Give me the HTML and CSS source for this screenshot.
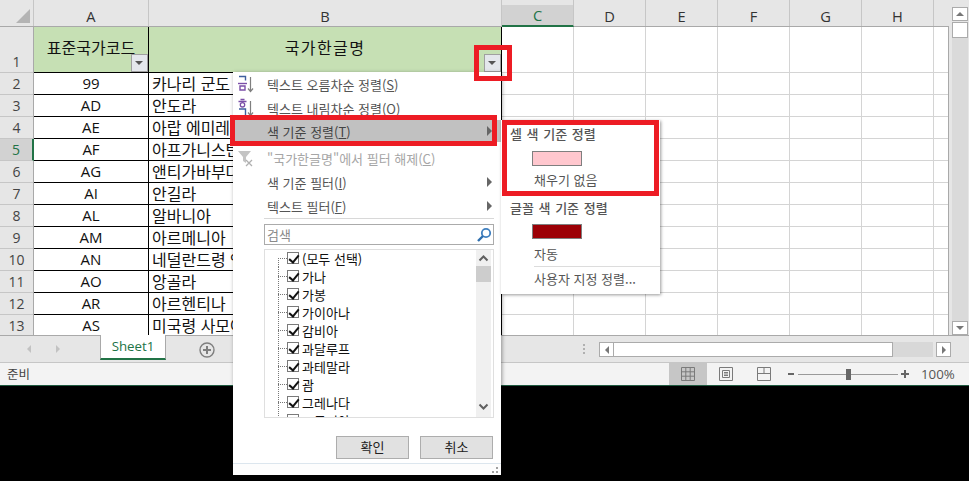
FILE: index.html
```html
<!DOCTYPE html>
<html lang="ko">
<head>
    <meta charset="UTF-8">
    <title>국가한글명 필터</title>
    <link rel="stylesheet" href="styles.css">
</head>
<body>
<div class="app">
    <div class="sheet">
        <div class="grid">
            <div class="col-heads">
                <div class="corner"><i></i></div>
                <div class="col-head col-a">A</div>
                <div class="col-head col-b">B</div>
                <div class="col-head col-n on">C</div>
                <div class="col-head col-n">D</div>
                <div class="col-head col-n">E</div>
                <div class="col-head col-n">F</div>
                <div class="col-head col-n">G</div>
                <div class="col-head col-n">H</div>
            </div>
            <div class="body">
                <div class="row-heads">
                    <div class="row-head first">1</div>
                    <div class="row-head">2</div>
                    <div class="row-head">3</div>
                    <div class="row-head">4</div>
                    <div class="row-head on">5</div>
                    <div class="row-head">6</div>
                    <div class="row-head">7</div>
                    <div class="row-head">8</div>
                    <div class="row-head">9</div>
                    <div class="row-head">10</div>
                    <div class="row-head">11</div>
                    <div class="row-head">12</div>
                    <div class="row-head">13</div>
                </div>
                <div class="cells">
                    <div class="cell title">표준국가코드<span class="filter-btn"></span></div>
                    <div class="cell title wide">국가한글명<span class="filter-btn"></span></div>
                    <div class="cell code">99</div><div class="cell name">카나리 군도</div>
                    <div class="cell code">AD</div><div class="cell name">안도라</div>
                    <div class="cell code">AE</div><div class="cell name">아랍 에미레이트</div>
                    <div class="cell code">AF</div><div class="cell name">아프가니스탄</div>
                    <div class="cell code">AG</div><div class="cell name">앤티가바부다</div>
                    <div class="cell code">AI</div><div class="cell name">안길라</div>
                    <div class="cell code">AL</div><div class="cell name">알바니아</div>
                    <div class="cell code">AM</div><div class="cell name">아르메니아</div>
                    <div class="cell code">AN</div><div class="cell name">네덜란드령 앤틸리스</div>
                    <div class="cell code">AO</div><div class="cell name">앙골라</div>
                    <div class="cell code">AR</div><div class="cell name">아르헨티나</div>
                    <div class="cell code">AS</div><div class="cell name">미국령 사모아</div>
                </div>
                <div class="blank">
                    <div class="blank-top"></div>
                    <div class="blank-rest"></div>
                </div>
            </div>
        </div>
        <div class="vscroll">
            <div class="sb-btn"><i class="tri-up"></i></div>
            <div class="sb-thumb"></div>
            <div class="sb-track"></div>
            <div class="sb-btn"><i class="tri-down"></i></div>
        </div>
    </div>

    <div class="tabbar">
        <div class="tab-nav"><i class="tri-left"></i><i class="tri-right"></i></div>
        <div class="tab">Sheet1</div>
        <svg class="add-sheet" width="16" height="16" viewBox="0 0 16 16"><circle cx="8" cy="8" r="7" fill="none" stroke="#7f7f7f" stroke-width="1.4"/><path d="M4 8h8M8 4v8" stroke="#7f7f7f" stroke-width="2"/></svg>
        <div class="split-dots"></div>
        <div class="hscroll">
            <div class="hs-btn"><i class="tri-left dark"></i></div>
            <div class="hs-thumb"></div>
            <div class="hs-track"></div>
            <div class="hs-btn"><i class="tri-right dark"></i></div>
        </div>
    </div>

    <div class="status">
        <span class="ready">준비</span>
        <div class="views">
            <div class="view on">
                <svg width="14" height="14" viewBox="0 0 14 14"><path d="M.5.5h13v13H.5zM.5 4.8h13M.5 9.2h13M4.8.5v13M9.2.5v13" fill="none" stroke="#7a7a7a"/></svg>
            </div>
            <div class="view">
                <svg width="14" height="14" viewBox="0 0 14 14"><path d="M.5.5h13v13H.5z" fill="none" stroke="#7a7a7a"/><path d="M3.5 3.5h7v7h-7zM5 5.5h4M5 7h4M5 8.5h4" fill="none" stroke="#7a7a7a"/></svg>
            </div>
            <div class="view">
                <svg width="14" height="14" viewBox="0 0 14 14"><path d="M.5.5h13v13H.5zM.5 6.5h13M7 .5v6" fill="none" stroke="#7a7a7a"/></svg>
            </div>
        </div>
        <div class="zoom">
            <span class="zoom-minus"></span>
            <div class="zoom-line"><i></i></div>
            <span class="zoom-plus"></span>
            <span class="zoom-val">100%</span>
        </div>
    </div>
</div>

<!-- 필터 메뉴 -->
<div class="menu">
    <div class="item">
        <svg class="ico" width="18" height="20" viewBox="0 0 18 20"><path d="M2 2.5h6.5v4" fill="none" stroke="#3f5f9f" stroke-width="1.4"/><path d="M1 9.5h9" stroke="#7b4fa8" stroke-width="1.4"/><path d="M3 12h5v4H3z" fill="none" stroke="#7b4fa8" stroke-width="1.4"/><path d="M13.5 3v14M11 14.5l2.5 3 2.5-3" fill="none" stroke="#7f7f7f" stroke-width="1.2"/></svg>
        <span>텍스트 오름차순 정렬(<u>S</u>)</span>
    </div>
    <div class="item">
        <svg class="ico" width="18" height="20" viewBox="0 0 18 20"><path d="M3.5 1.5h4M1.5 3.5h8" fill="none" stroke="#7b4fa8" stroke-width="1.3"/><circle cx="5.5" cy="6.8" r="2.2" fill="none" stroke="#7b4fa8" stroke-width="1.3"/><path d="M2 11h6.5v6" fill="none" stroke="#3f5f9f" stroke-width="1.4"/><path d="M13.5 3v14M11 14.5l2.5 3 2.5-3" fill="none" stroke="#7f7f7f" stroke-width="1.2"/></svg>
        <span>텍스트 내림차순 정렬(<u>O</u>)</span>
    </div>
    <div class="item hover"><span>색 기준 정렬(<u>T</u>)</span><i class="arrow"></i></div>
    <div class="item off">
        <svg class="ico" width="18" height="20" viewBox="0 0 18 20"><path d="M3 3h13l-5 6v6l-3-2V9z" fill="#c4c4c4" transform="translate(-2)"/><path d="M9 12l6 6M15 12l-6 6" stroke="#b0b0b0" stroke-width="1.3"/></svg>
        <span>"국가한글명"에서 필터 해제(<u>C</u>)</span>
    </div>
    <div class="item"><span>색 기준 필터(<u>I</u>)</span><i class="arrow"></i></div>
    <div class="item"><span>텍스트 필터(<u>F</u>)</span><i class="arrow"></i></div>
    <div class="sep"></div>
    <div class="search">
        <span>검색</span>
        <svg width="16" height="16" viewBox="0 0 16 16"><circle cx="10" cy="6" r="4.2" fill="none" stroke="#3f7fbf" stroke-width="1.8"/><path d="M7 9l-5 5" stroke="#2f6fae" stroke-width="2.4"/></svg>
    </div>
    <div class="list">
        <div class="tree">
            <div class="node top"><b></b><em></em>(모두 선택)</div>
            <div class="node"><b></b><em></em>가나</div>
            <div class="node"><b></b><em></em>가봉</div>
            <div class="node"><b></b><em></em>가이아나</div>
            <div class="node"><b></b><em></em>감비아</div>
            <div class="node"><b></b><em></em>과달루프</div>
            <div class="node"><b></b><em></em>과테말라</div>
            <div class="node"><b></b><em></em>괌</div>
            <div class="node"><b></b><em></em>그레나다</div>
            <div class="node"><b></b><em></em>그루지야</div>
        </div>
        <div class="list-sb">
            <svg class="chev" width="15" height="13" viewBox="0 0 15 13"><path d="M3.5 8.5l4-4 4 4" fill="none" stroke="#606060" stroke-width="2"/></svg>
            <div class="list-thumb"></div>
            <div class="list-track"></div>
            <svg class="chev" width="15" height="13" viewBox="0 0 15 13"><path d="M3.5 4.5l4 4 4-4" fill="none" stroke="#606060" stroke-width="2"/></svg>
        </div>
    </div>
    <div class="buttons">
        <div class="btn">확인</div>
        <div class="btn">취소</div>
    </div>
    <div class="grip"><i></i></div>
</div>

<!-- 색 기준 정렬 하위 메뉴 -->
<div class="submenu">
    <div class="sub-title">셀 색 기준 정렬</div>
    <div class="swatch-row"><span class="swatch pink"></span></div>
    <div class="sub-item">채우기 없음</div>
    <div class="sub-title second">글꼴 색 기준 정렬</div>
    <div class="swatch-row"><span class="swatch red"></span></div>
    <div class="sub-item">자동</div>
    <div class="sub-sep"></div>
    <div class="sub-item">사용자 지정 정렬...</div>
</div>

<div class="mark mark-btn"></div>
<div class="mark mark-item"></div>
<div class="mark mark-sub"></div>
</body>
</html>
```

FILE: styles.css
```css
* {
    box-sizing: border-box;
}
html, body {
    margin: 0;
    height: 100%;
    overflow: hidden;
}
body {
    position: relative;
    background: #000;
    font-family: "Noto Sans CJK KR", "Noto Sans", sans-serif;
    color: #111;
}
.app {
    height: 386px;
    display: flex;
    flex-direction: column;
    background: #e6e6e6;
    border-bottom: 1px solid #1f5a40;
}

/* sheet */
.sheet {
    height: 335px;
    display: flex;
    overflow: hidden;
}
.grid {
    width: 949px;
    display: flex;
    flex-direction: column;
}
.col-heads {
    height: 27px;
    display: flex;
    flex-shrink: 0;
    border-bottom: 1px solid #a9a9a9;
}
.corner {
    width: 34px;
    display: flex;
    align-items: flex-end;
    justify-content: flex-end;
    padding: 0 3px 3px 0;
    border-right: 1px solid #c6c6c6;
}
.corner i {
    width: 0;
    height: 0;
    border-left: 14px solid transparent;
    border-bottom: 14px solid #b4b4b4;
}
.col-head {
    display: flex;
    align-items: center;
    justify-content: center;
    font: 14.67px "Open Sans", sans-serif;
    color: #333;
    padding-top: 5px;
    border-right: 1px solid #c6c6c6;
    background: linear-gradient(#e6e6e6 5px, transparent 5px);
}
.col-a { width: 115px; }
.col-b { width: 353px; }
.col-n { width: 72px; }
.col-head.on {
    background: linear-gradient(#e6e6e6 5px, #d2d2d2 5px);
    border-bottom: 2px solid #217346;
    height: 27px;
    color: #217346;
}
.body {
    flex: 1;
    display: flex;
    overflow: hidden;
}
.row-heads {
    width: 34px;
    flex-shrink: 0;
    border-right: 1px solid #a9a9a9;
}
.row-head {
    height: 22px;
    text-align: center;
    font: 14px/22px "Open Sans", sans-serif;
    color: #444;
    border-bottom: 1px solid #c6c6c6;
}
.row-head.first {
    height: 46px;
    line-height: 70px;
}
.row-head.on {
    background: #d2d2d2;
    color: #217346;
    border-right: 2px solid #217346;
    margin-right: -1px;
}
.cells {
    width: 468px;
    flex-shrink: 0;
    display: grid;
    grid-template-columns: 115px 353px;
    grid-auto-rows: 22px;
    grid-template-rows: 46px;
    background: #fff;
}
.cell {
    border-right: 1px solid #000;
    border-bottom: 1px solid #000;
    font-size: 16px;
    line-height: 21px;
    white-space: nowrap;
    overflow: hidden;
}
.title {
    position: relative;
    background: #c6e0b4;
    text-align: center;
    line-height: 40px;
}
.title.wide {
    letter-spacing: 1.4px;
}
.code {
    text-align: center;
    font-family: "Open Sans", sans-serif;
    font-size: 15px;
}
.name {
    padding-left: 3px;
}
.filter-btn {
    position: absolute;
    right: 0;
    bottom: 0;
    width: 17px;
    height: 18px;
    background: #e4e7ec;
    border: 1px solid #a0a0a0;
}
.filter-btn::after {
    content: "";
    position: absolute;
    left: 3px;
    top: 6px;
    border: 4px solid transparent;
    border-top: 4px solid #555;
}
.blank {
    flex: 1;
    background: #fff;
    border-right: 1px solid #a9a9a9;
}
.blank-top {
    height: 46px;
    border-bottom: 1px solid #d4d4d4;
    background: repeating-linear-gradient(to right, transparent 0 71px, #d4d4d4 71px 72px);
}
.blank-rest {
    height: 262px;
    background:
        repeating-linear-gradient(to right, transparent 0 71px, #d4d4d4 71px 72px),
        repeating-linear-gradient(to bottom, transparent 0 21px, #d4d4d4 21px 22px);
}

/* vertical scroll bar */
.vscroll {
    width: 16px;
    margin-left: 3px;
    padding-top: 7px;
    display: flex;
    flex-direction: column;
    gap: 1px;
}
.sb-btn {
    height: 14px;
    flex-shrink: 0;
    display: flex;
    align-items: center;
    justify-content: center;
    background: #fff;
    border: 1px solid #ababab;
}
.sb-thumb {
    height: 16px;
    flex-shrink: 0;
    background: #fff;
    border: 1px solid #ababab;
}
.sb-track {
    flex: 1;
    background: #dadada;
    margin: -1px 0;
}
.tri-up, .tri-down, .tri-left, .tri-right {
    display: block;
    width: 0;
    height: 0;
    border: 4px solid transparent;
}
.tri-up { border-bottom-color: #777; border-top-width: 0; }
.tri-down { border-top-color: #777; border-bottom-width: 0; }
.tri-left { border-right-color: #c2c2c2; border-left-width: 0; }
.tri-right { border-left-color: #c2c2c2; border-right-width: 0; }
.tri-left.dark { border-right-color: #777; }
.tri-right.dark { border-left-color: #777; }

/* tab bar */
.tabbar {
    height: 28px;
    display: flex;
    align-items: flex-start;
    border-top: 1px solid #a9a9a9;
    border-bottom: 1px solid #c6c6c6;
    flex-shrink: 0;
}
.tab-nav {
    width: 100px;
    height: 26px;
    padding-left: 27px;
    display: flex;
    align-items: center;
    gap: 25px;
}
.tab {
    width: 66px;
    height: 25px;
    margin-top: -1px;
    padding-bottom: 2px;
    background: #fff;
    border-left: 1px solid #a9a9a9;
    border-right: 1px solid #a9a9a9;
    border-bottom: 2px solid #217346;
    color: #217346;
    font: 13.3px/23px "Open Sans", sans-serif;
    text-align: center;
}
.add-sheet {
    margin: 6px 0 0 33px;
}
.split-dots {
    width: 2px;
    height: 10px;
    margin: 8px 0 0 368px;
    background: repeating-linear-gradient(to bottom, #b0b0b0 0 2px, transparent 2px 4px);
}
.hscroll {
    width: 352px;
    height: 15px;
    margin: 6px 0 0 14px;
    display: flex;
}
.hs-btn {
    width: 15px;
    flex-shrink: 0;
    display: flex;
    align-items: center;
    justify-content: center;
    background: #fff;
    border: 1px solid #ababab;
}
.hs-thumb {
    width: 280px;
    margin-left: -1px;
    background: #fff;
    border: 1px solid #ababab;
}
.hs-track {
    flex: 1;
    background: #d8d8d8;
    margin-right: 3px;
}

/* status bar */
.status {
    flex: 1;
    display: flex;
    background: #f3f3f3;
    font-size: 12.5px;
    color: #444;
}
.ready {
    padding: 2px 0 0 7px;
    line-height: 18px;
}
.views {
    margin-left: auto;
    display: flex;
}
.view {
    width: 38px;
    display: flex;
    align-items: center;
    justify-content: center;
}
.view.on {
    background: #c6c6c6;
}
.zoom {
    width: 186px;
    padding-left: 5px;
    display: flex;
    align-items: center;
}
.zoom-minus {
    width: 6px;
    height: 2px;
    background: #666;
}
.zoom-line {
    width: 100px;
    height: 1px;
    margin: 0 3px 0 4px;
    background: #9a9a9a;
    display: flex;
    align-items: center;
    justify-content: center;
}
.zoom-line i {
    width: 5px;
    height: 11px;
    background: #666;
    flex-shrink: 0;
}
.zoom-plus {
    width: 8px;
    height: 8px;
    background: linear-gradient(#666, #666) center / 8px 2px no-repeat, linear-gradient(#666, #666) center / 2px 8px no-repeat;
}
.zoom-val {
    margin-left: 12px;
    font: 13.3px "Open Sans", sans-serif;
    color: #555;
}

/* filter menu */
.menu {
    position: absolute;
    left: 233px;
    top: 72px;
    width: 268px;
    height: 403px;
    background: #fff;
    box-shadow: 1px 1px 4px rgba(0, 0, 0, .4);
    display: flex;
    flex-direction: column;
    font-size: 13px;
    color: #555;
}
.item {
    height: 24px;
    flex-shrink: 0;
    display: flex;
    align-items: center;
    padding-left: 34px;
    position: relative;
    white-space: nowrap;
}
.item.hover {
    background: #c1c1c1;
    color: #444;
    height: 22px;
    margin-bottom: 2px;
}
.item.off {
    color: #a6a6a6;
    margin-top: 2px;
}
.ico {
    position: absolute;
    left: 4px;
    top: 2px;
}
.arrow {
    position: absolute;
    right: 9px;
    top: 50%;
    margin-top: -5px;
    border: 5px solid transparent;
    border-left: 5px solid #666;
    border-right-width: 0;
}
.sep {
    height: 1px;
    flex-shrink: 0;
    margin: 0 7px 0 31px;
    background: #d8d8d8;
}
.search {
    height: 21px;
    flex-shrink: 0;
    margin: 5px 7px 4px 31px;
    display: flex;
    align-items: center;
    justify-content: space-between;
    padding: 0 1px 0 2px;
    border: 1px solid #ababab;
    color: #8a8a8a;
}
.list {
    height: 169px;
    flex-shrink: 0;
    margin: 0 7px 0 31px;
    display: flex;
    border: 1px solid #dfdfdf;
    overflow: hidden;
    color: #111;
}
.tree {
    flex: 1;
    margin-top: -1px;
    padding-left: 13px;
}
.node {
    height: 18px;
    display: flex;
    align-items: center;
    white-space: nowrap;
}
.node b {
    width: 9px;
    height: 18px;
    background:
        repeating-linear-gradient(to right, #777 0 1px, transparent 1px 2px) 0 9px / 9px 1px no-repeat,
        repeating-linear-gradient(to bottom, #777 0 1px, transparent 1px 2px) 0 0 / 1px 18px no-repeat;
}
.node.top b {
    background:
        repeating-linear-gradient(to right, #777 0 1px, transparent 1px 2px) 0 9px / 9px 1px no-repeat,
        repeating-linear-gradient(to bottom, #777 0 1px, transparent 1px 2px) 0 9px / 1px 9px no-repeat;
}
.node em {
    position: relative;
    width: 12px;
    height: 12px;
    margin-right: 3px;
    border: 1px solid #7a7a7a;
    background: #fff;
}
.node em::after {
    content: "";
    position: absolute;
    left: 3px;
    top: 0;
    width: 4px;
    height: 8px;
    border: solid #111;
    border-width: 0 2px 2px 0;
    transform: rotate(40deg);
}
.list-sb {
    width: 15px;
    margin-right: 2px;
    display: flex;
    flex-direction: column;
    background: #f0f0f0;
    padding-top: 11px;
}
.chev {
    flex-shrink: 0;
    margin-top: -9px;
    margin-bottom: 1px;
}
.list-track {
    flex: 1;
}
.list-thumb {
    height: 16px;
    flex-shrink: 0;
    background: #cdcdcd;
}
.list-sb .chev:last-child {
    margin: 0 0 4px;
}
.buttons {
    margin: 18px 8px 0 0;
    display: flex;
    justify-content: flex-end;
    gap: 11px;
}
.btn {
    width: 73px;
    height: 23px;
    background: #e1e1e1;
    border: 1px solid #adadad;
    color: #222;
    line-height: 20px;
    text-align: center;
}
.grip {
    margin-top: 4px;
    flex: 1;
    display: flex;
    justify-content: flex-end;
    align-items: flex-end;
    border-top: 1px solid #dce6ee;
    background: #fdfdfd;
    padding: 0 3px 2px 0;
}
.grip i {
    width: 6px;
    height: 6px;
    background:
        linear-gradient(#a0a0a0, #a0a0a0) 4px 0 / 2px 2px no-repeat,
        linear-gradient(#a0a0a0, #a0a0a0) 0 4px / 2px 2px no-repeat,
        linear-gradient(#a0a0a0, #a0a0a0) 4px 4px / 2px 2px no-repeat;
}

/* submenu */
.submenu {
    position: absolute;
    left: 501px;
    top: 120px;
    width: 159px;
    height: 174px;
    background: #fff;
    box-shadow: 1px 1px 3px rgba(0, 0, 0, .4);
    font-size: 13px;
    color: #555;
}
.sub-title {
    height: 23px;
    padding: 5px 0 0 9px;
    line-height: 18px;
    font-weight: 500;
    word-spacing: 1px;
}
.sub-title.second {
    margin-top: 2px;
}
.swatch-row {
    height: 25px;
    padding: 8px 0 0 31px;
}
.sub-title.second + .swatch-row {
    height: 25px;
    padding-top: 7px;
}
.swatch {
    display: block;
    width: 50px;
    height: 15px;
    border: 1px solid #7f7f7f;
}
.swatch.pink { background: #ffc7ce; }
.swatch.red { background: #9c0006; }
.sub-item {
    height: 24px;
    padding-left: 33px;
    line-height: 24px;
}
.sub-sep {
    height: 1px;
    margin: 0 0 0 33px;
    background: #dcdcdc;
}

/* red marks */
.mark {
    position: absolute;
    border: 5px solid #ed1c24;
}
.mark-btn {
    left: 474px;
    top: 45px;
    width: 38px;
    height: 36px;
}
.mark-item {
    left: 230px;
    top: 115px;
    width: 267px;
    height: 31px;
}
.mark-sub {
    left: 502px;
    top: 120px;
    width: 157px;
    height: 76px;
}
```
